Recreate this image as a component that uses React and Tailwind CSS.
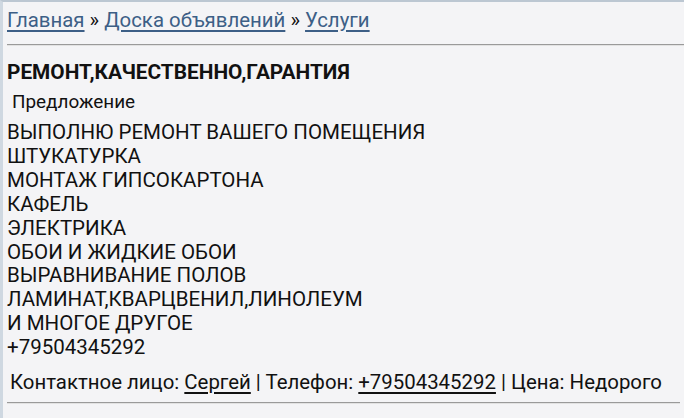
import React from 'react';

const lines = [
  'ВЫПОЛНЮ РЕМОНТ ВАШЕГО ПОМЕЩЕНИЯ',
  'ШТУКАТУРКА',
  'МОНТАЖ ГИПСОКАРТОНА',
  'КАФЕЛЬ',
  'ЭЛЕКТРИКА',
  'ОБОИ И ЖИДКИЕ ОБОИ',
  'ВЫРАВНИВАНИЕ ПОЛОВ',
  'ЛАМИНАТ,КВАРЦВЕНИЛ,ЛИНОЛЕУМ',
  'И МНОГОЕ ДРУГОЕ',
  '+79504345292',
];

export default function App() {
  return (
    <div
      className="min-h-[418px] bg-[#f4f4f6] border-l-[3px] border-t-2 border-l-[#cfd8e1] border-t-[#bcc7d2] text-[#111] overflow-hidden"
      style={{ fontFamily: 'Roboto, "Noto Sans", sans-serif' }}
    >
      {/* Breadcrumbs */}
      <div className="px-[4px] pt-[6px] text-[20.4px] leading-[24px]">
        <a href="#" className="text-[#3d5f86] underline underline-offset-[3px]">Главная</a>
        <span> » </span>
        <a href="#" className="text-[#3d5f86] underline underline-offset-[3px]">Доска объявлений</a>
        <span> » </span>
        <a href="#" className="text-[#3d5f86] underline underline-offset-[3px]">Услуги</a>
      </div>
      <div className="ml-[4px] mt-[12px] border-t border-b border-t-[#9a9a9a] border-b-[#e2e2e2]" />

      {/* Ad */}
      <div className="px-[4px] pt-[15px]">
        <h1 className="text-[20.8px] leading-[22px] font-bold">РЕМОНТ,КАЧЕСТВЕННО,ГАРАНТИЯ</h1>
        <div className="pl-[5px] mt-[8px] text-[18.9px] leading-[22px]">Предложение</div>
        <div className="mt-[8px] text-[20.5px] leading-[23.9px]">
          {lines.map((l) => (
            <div key={l}>{l}</div>
          ))}
        </div>
        <div className="pl-[3px] mt-[11px] text-[20.4px] leading-[22px]">
          Контактное лицо: <a href="#" className="underline underline-offset-[3px]">Сергей</a> | Телефон:{' '}
          <a href="#" className="underline underline-offset-[3px]">+79504345292</a> | Цена: Недорого
        </div>
        <div className="mt-[9px] border-t border-b border-t-[#9a9a9a] border-b-[#e2e2e2]" />
      </div>
    </div>
  );
}
